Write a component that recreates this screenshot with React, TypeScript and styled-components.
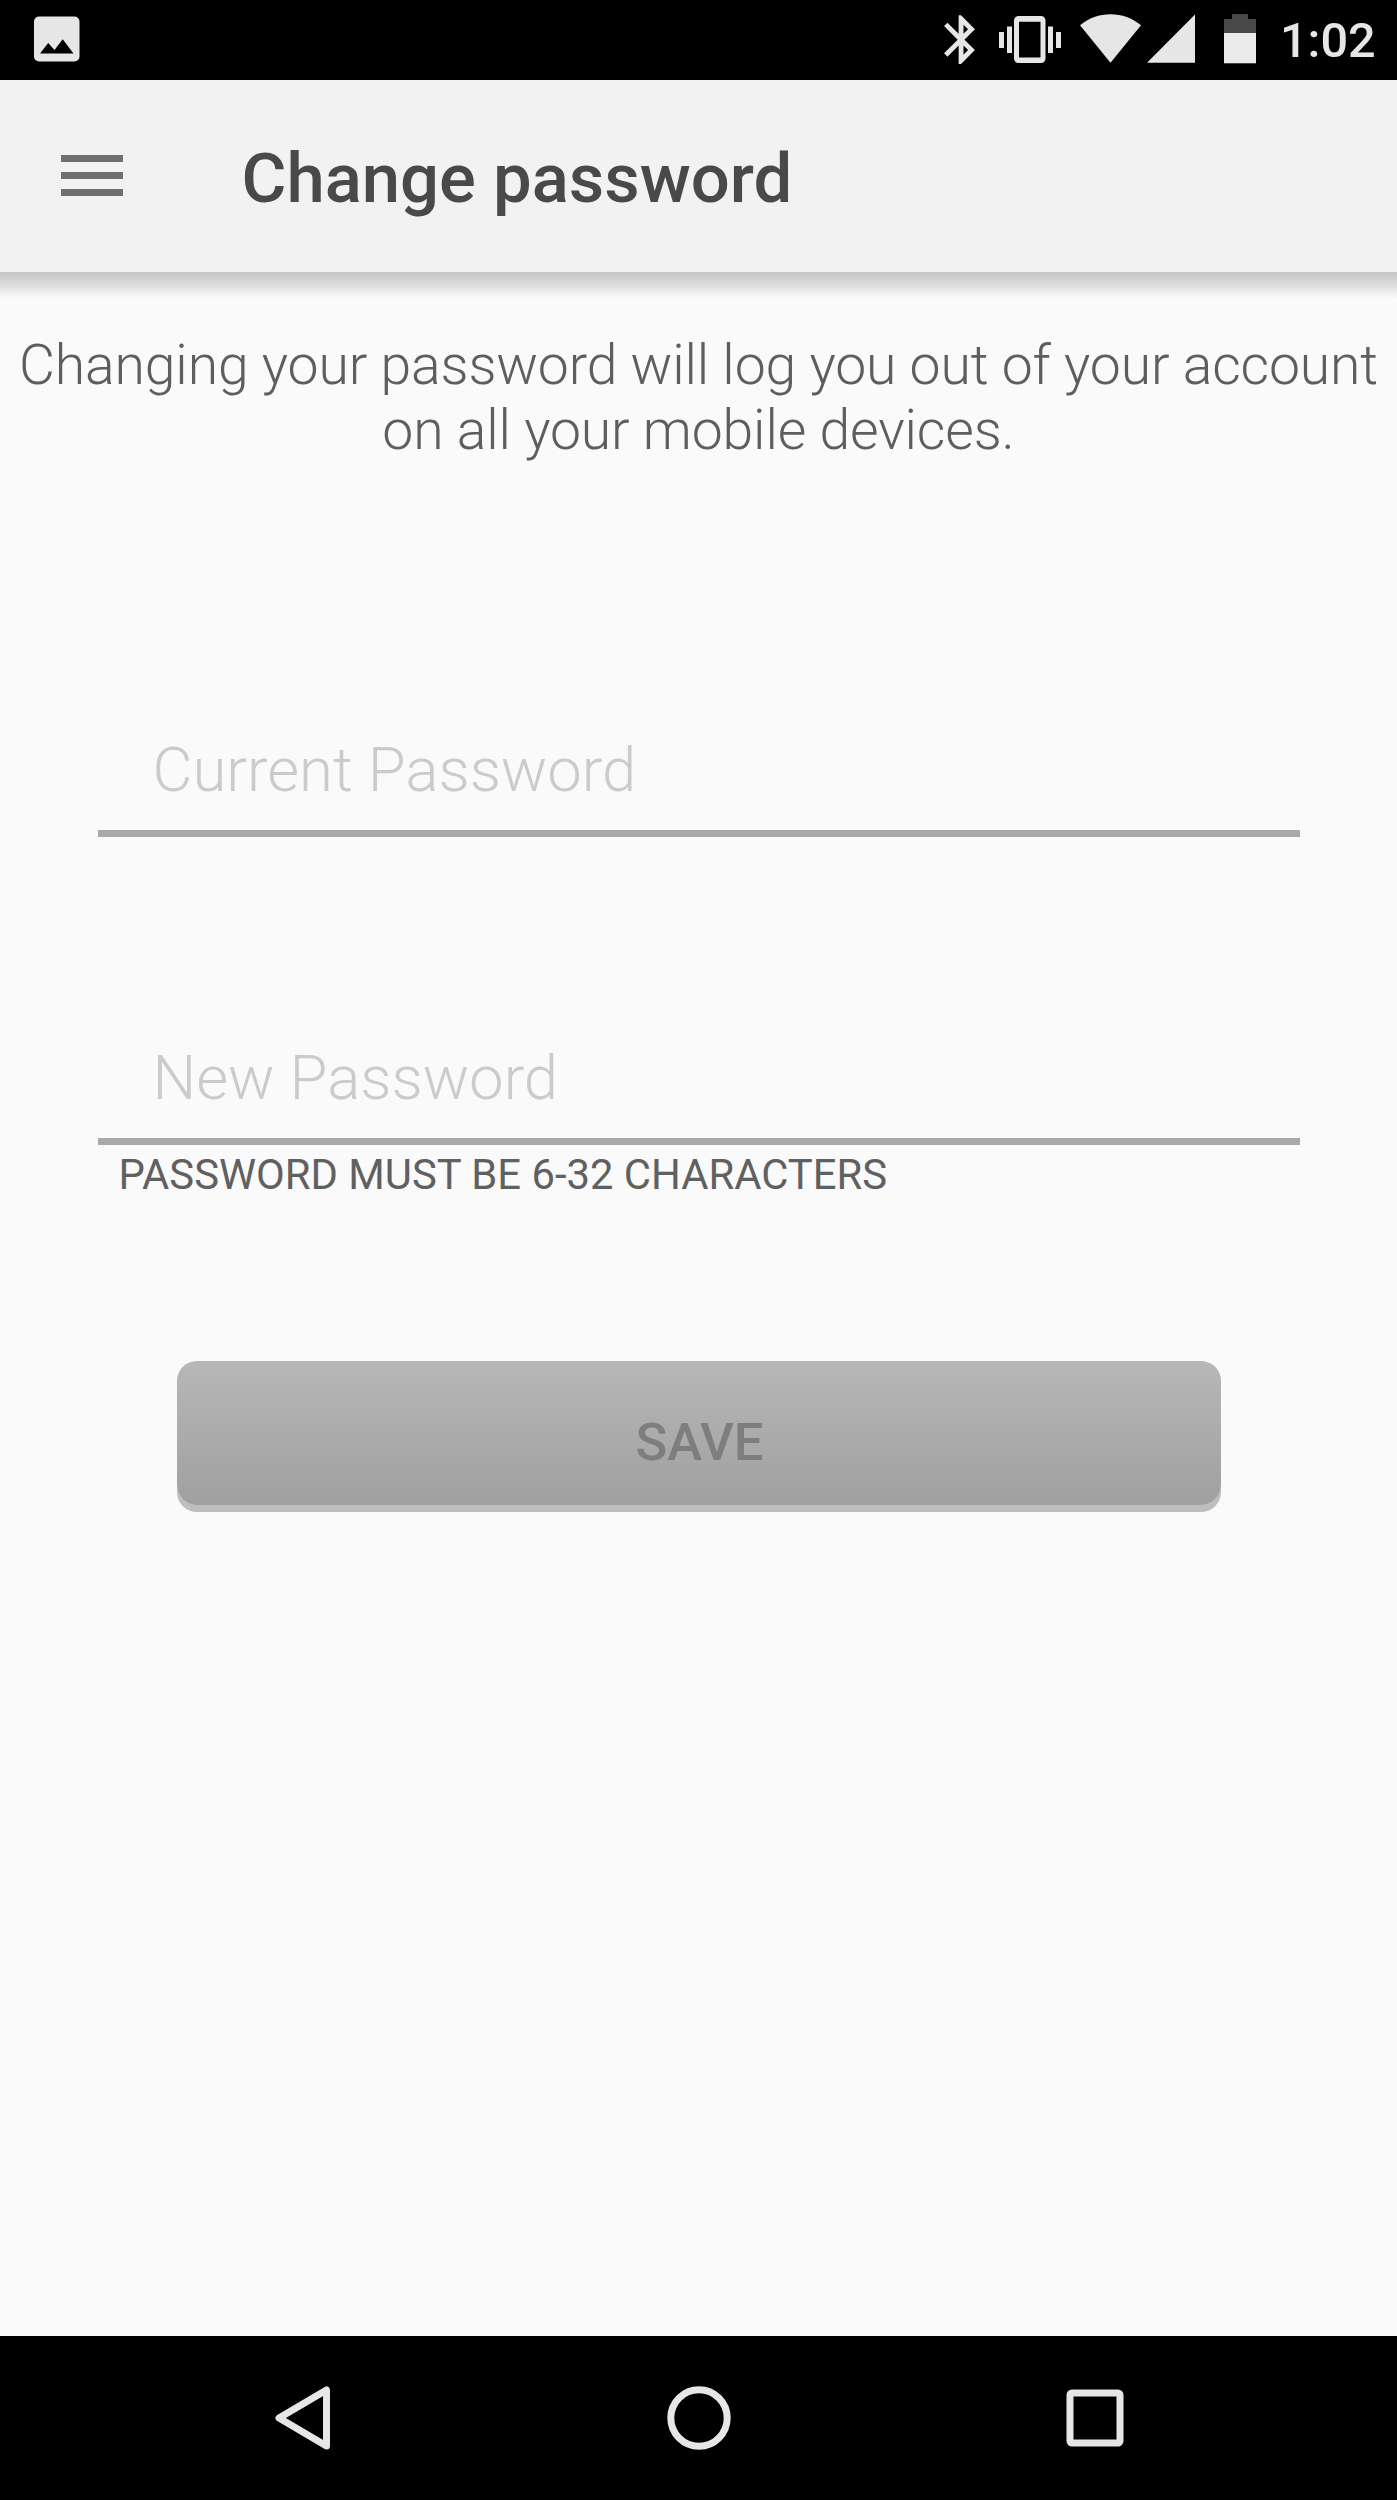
import React from "react";
import styled, { createGlobalStyle } from "styled-components";

const GlobalStyle = createGlobalStyle`
  *, *::before, *::after { box-sizing: border-box; }
  body {
    margin: 0;
    background: #fafafa;
    font-family: Roboto, "Noto Sans", sans-serif;
  }
`;

const Screen = styled.div`
  display: flex;
  flex-direction: column;
  width: 1397px;
  height: 2500px;
  overflow: hidden;
  background: #fafafa;
`;

const StatusBar = styled.div`
  display: flex;
  flex: none;
  align-items: flex-start;
  justify-content: space-between;
  height: 80px;
  padding: 0 22px 0 34px;
  background: #000;
`;

const StatusIcons = styled.div`
  display: flex;
  align-items: flex-start;
`;

const StatusIcon = styled.svg<{ $gap?: number }>`
  display: block;
  flex: none;
  height: 80px;
  margin-left: ${(p) => p.$gap ?? 0}px;
  fill: #e6e6e6;
`;

const Clock = styled.time`
  width: 95px;
  margin-left: 24px;
  color: #e6e6e6;
  font-size: 48.6px;
  font-weight: 500;
  line-height: 82px;
  white-space: nowrap;
`;

const AppBar = styled.header`
  display: flex;
  flex: none;
  align-items: center;
  height: 192px;
  padding-left: 60.6px;
  background: #f2f2f2;
`;

const MenuButton = styled.button`
  display: flex;
  flex-direction: column;
  gap: 10px;
  width: 62px;
  margin: 0 0 2px;
  padding: 0;
  border: 0;
  background: none;
`;

const MenuLine = styled.span`
  height: 7px;
  background: #6f6f6f;
`;

const Title = styled.h1`
  margin: 6px 0 0 119px;
  color: #494949;
  font-size: 68.8px;
  font-weight: 500;
  line-height: 80px;
`;

const Content = styled.main`
  display: flex;
  flex: 1;
  flex-direction: column;
  align-items: center;
`;

const AppBarShadow = styled.div`
  flex: none;
  width: 100%;
  height: 26px;
  background: linear-gradient(#c6c6c6, #dcdcdc 50%, #fafafa);
`;

const Notice = styled.p`
  margin: 36px 0 0;
  color: #5e5e5e;
  font-size: 55.3px;
  font-weight: 300;
  letter-spacing: -0.14px;
  line-height: 64.7px;
  text-align: center;
  white-space: nowrap;
`;

const Field = styled.input<{ $top: number }>`
  display: block;
  flex: none;
  width: 1202px;
  height: 132px;
  margin: ${(p) => p.$top}px 0 0;
  padding: 5px 55px 0;
  border: 0;
  border-bottom: 7px solid #a9a9a9;
  border-radius: 0;
  background: none;
  font-family: inherit;
  font-size: 61.6px;
  font-weight: 300;
  outline: none;
  &::placeholder { color: #cbcbcb; opacity: 1; }
`;

const Hint = styled.p`
  width: 1202px;
  margin: 5px 0 0;
  padding-left: 21px;
  color: #606060;
  font-size: 41.8px;
  line-height: 50px;
`;

const SaveButton = styled.button`
  width: 1044px;
  height: 144px;
  margin: 161px 0 0;
  padding: 18px 0 0 2px;
  border: 0;
  border-radius: 20px;
  background: linear-gradient(#b7b7b7, #a0a0a0);
  box-shadow: 0 7px 0 #bebebe;
  color: #7e7e7e;
  font-family: inherit;
  font-size: 52.5px;
  font-weight: 500;
  line-height: 60px;
`;

const NavBar = styled.nav`
  display: flex;
  flex: none;
  justify-content: center;
  height: 164px;
  padding-left: 1px;
  background: #000;
`;

const NavButton = styled.button`
  display: flex;
  align-items: center;
  justify-content: center;
  width: 396px;
  padding: 0;
  border: 0;
  background: none;
`;

const NavIcon = styled.svg`
  display: block;
  fill: none;
  stroke: #e6e6e6;
  stroke-width: 7;
  stroke-linejoin: round;
`;

export default function App() {
  return (
    <>
      <GlobalStyle />
      <Screen>
        <StatusBar>
          <StatusIcon width="46" viewBox="0 0 46 80">
            <path
              fillRule="evenodd"
              d="M5 16.5H40.500a5 5 0 0 1 5 5V56.500a5 5 0 0 1-5 5H5a5 5 0 0 1-5-5V21.500a5 5 0 0 1 5-5ZM6 53.500H39.500L28.700 39.300L20.500 50L14.200 42.900Z"
            />
          </StatusIcon>
          <StatusIcons>
            <StatusIcon width="31" viewBox="0 0 31 80">
              <path
                transform="translate(-12.100 10.500) scale(2.430)"
                d="M17.710 7.710L12 2h-1v7.590L6.410 5 5 6.410 10.590 12 5 17.590 6.410 19 11 14.410V22h1l5.710-5.710-4.300-4.290 4.300-4.290zM13 5.830l1.880 1.880L13 9.590V5.830zm1.880 10.460L13 18.170v-3.760l1.880 1.880z"
              />
            </StatusIcon>
            <StatusIcon $gap={24} width="62" viewBox="0 0 62 80">
              <path d="M0 32h5v16h-5zM8 26.500h5v26.500h-5zM49 26.500h5v26.500h-5zM57 32h5v16h-5z" />
              <path
                fillRule="evenodd"
                d="M19.500 16H42a4.500 4.500 0 0 1 4.500 4.500V58.500a4.500 4.500 0 0 1-4.500 4.500H19.500a4.500 4.500 0 0 1-4.500-4.500V20.500a4.500 4.500 0 0 1 4.500-4.500ZM20 21.800V57.500H41.500V21.800Z"
              />
            </StatusIcon>
            <StatusIcon $gap={19} width="61" viewBox="0 0 61 80">
              <path d="M0 25.300C9 18 19 14.300 30.500 14.300S52 18 61 25.300L30.500 62.700Z" />
            </StatusIcon>
            <StatusIcon $gap={6} width="48" viewBox="0 0 48 80">
              <path d="M0 62.700L48 14.500V62.700Z" />
            </StatusIcon>
            <StatusIcon $gap={29} width="32" viewBox="0 0 32 80">
              <path fill="#484848" d="M8 14H24V19H32V33H0V19H8Z" />
              <path fill="#ebebeb" d="M0 33H32V63.300H0Z" />
            </StatusIcon>
            <Clock>1:02</Clock>
          </StatusIcons>
        </StatusBar>

        <AppBar>
          <MenuButton aria-label="Menu">
            <MenuLine />
            <MenuLine />
            <MenuLine />
          </MenuButton>
          <Title>Change password</Title>
        </AppBar>

        <Content>
          <AppBarShadow />
          <Notice>
            Changing your password will log you out of your account
            <br />
            on all your mobile devices.
          </Notice>
          <Field $top={242} type="password" placeholder="Current Password" />
          <Field $top={176} type="password" placeholder="New Password" />
          <Hint>PASSWORD MUST BE 6-32 CHARACTERS</Hint>
          <SaveButton>SAVE</SaveButton>
        </Content>

        <NavBar>
          <NavButton aria-label="Back">
            <NavIcon width="56" height="64" viewBox="0 0 56 64">
              <path d="M51.500 4V60L4 32Z" />
            </NavIcon>
          </NavButton>
          <NavButton aria-label="Home">
            <NavIcon width="64" height="64" viewBox="0 0 64 64">
              <circle cx="32" cy="32" r="28.200" />
            </NavIcon>
          </NavButton>
          <NavButton aria-label="Recent apps">
            <NavIcon width="58" height="58" viewBox="0 0 58 58">
              <rect x="4" y="4" width="50" height="50" rx="2" />
            </NavIcon>
          </NavButton>
        </NavBar>
      </Screen>
    </>
  );
}
